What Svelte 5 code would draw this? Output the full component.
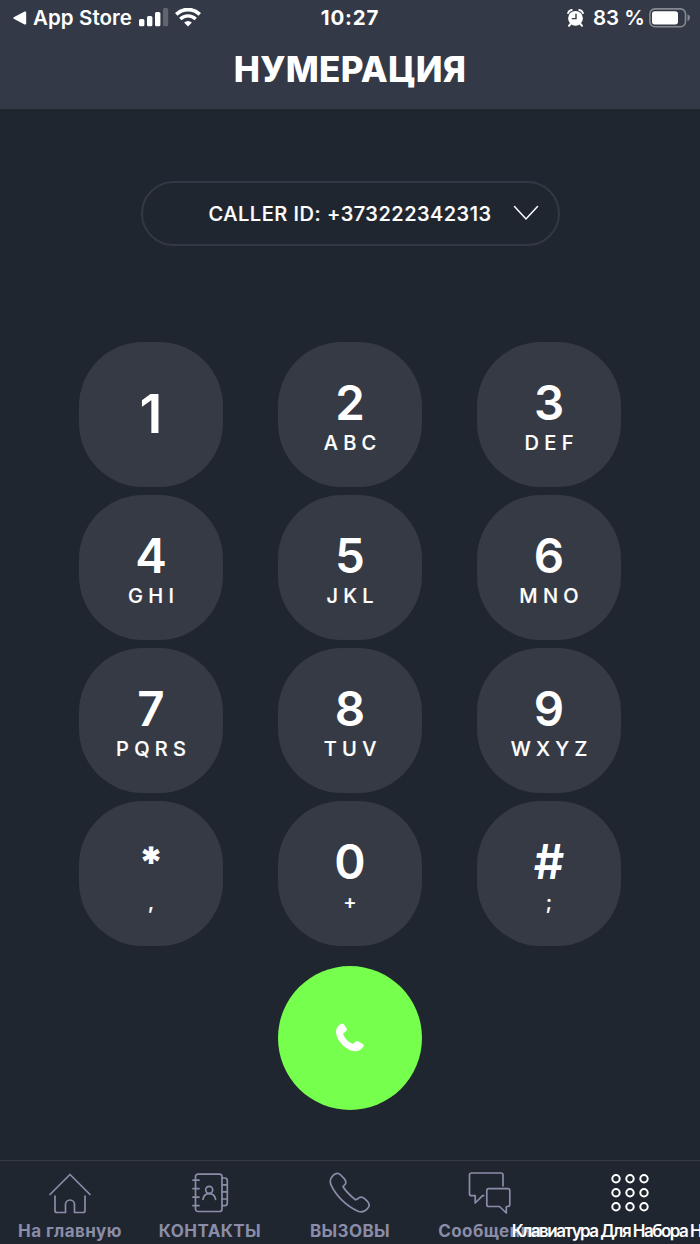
<script>
  const keys = [
    ['1', ''], ['2', 'ABC'], ['3', 'DEF'],
    ['4', 'GHI'], ['5', 'JKL'], ['6', 'MNO'],
    ['7', 'PQRS'], ['8', 'TUV'], ['9', 'WXYZ'],
    ['*', ','], ['0', '+'], ['#', ';']
  ];
  const dots = [6, 20, 34];
</script>

<div class="screen">
  <header>
    <div class="status">
      <div class="left">
        <svg class="back" width="14" height="14" viewBox="0 0 14 14"><path d="M.8 6.2 L11.6 .6 Q13.2 0 13.2 1.8 V12.2 Q13.2 14 11.6 13.4 L.8 7.8 Q-.2 7 .8 6.2Z" fill="#fff" /></svg>
        <span class="store">App Store</span>
        <svg class="signal" width="30" height="19" viewBox="0 0 30 19" fill="#fff">
          <rect x="0" y="11" width="5.4" height="7.2" rx="1.5" />
          <rect x="8" y="8" width="5.4" height="10.2" rx="1.5" />
          <rect x="16" y="4" width="5.4" height="14.2" rx="1.5" />
          <rect x="24" y="0" width="5.2" height="18.2" rx="1.5" opacity=".22" />
        </svg>
        <svg class="wifi" width="26" height="19" viewBox="0 0 26 19" fill="none" stroke="#fff">
          <path d="M1.2 6.3 A17 17 0 0 1 24.8 6.3" stroke-width="3.7" />
          <path d="M5.3 11 A11 11 0 0 1 20.7 11" stroke-width="3.4" />
          <path d="M13 18.6 L9.1 14.6 Q13 11.4 16.9 14.6Z" fill="#fff" stroke="none" />
        </svg>
      </div>
      <div class="time">10:27</div>
      <div class="right">
        <svg class="alarm" width="17" height="18" viewBox="0 0 17 18">
          <circle cx="8.5" cy="9.3" r="7.4" fill="#fff" />
          <path d="M1 4.2 Q1.8 1.5 4.8 1 M16 4.2 Q15.2 1.5 12.2 1" stroke="#fff" stroke-width="1.8" fill="none" stroke-linecap="round" />
          <path d="M3.5 15 L2 16.8 M13.5 15 L15 16.8" stroke="#fff" stroke-width="2" stroke-linecap="round" />
          <path d="M9 4.7 V9.6 H4.8" stroke="#333946" stroke-width="1.4" fill="none" />
        </svg>
        <span class="percent">83 %</span>
        <svg class="battery" width="42" height="20" viewBox="0 0 42 20">
          <rect x=".9" y=".9" width="35.6" height="17.8" rx="5" fill="none" stroke="#858991" stroke-width="1.6" />
          <rect x="3" y="3.2" width="26" height="13.2" rx="2.7" fill="#fff" />
          <path d="M38.5 6.3 Q41 7.3 41 9.6 Q41 12 38.5 13Z" fill="#858991" />
        </svg>
      </div>
    </div>
    <h1>НУМЕРАЦИЯ</h1>
  </header>

  <main>
    <button class="caller">
      <span>CALLER ID: +373222342313</span>
      <svg width="26" height="16" viewBox="0 0 26 16"><path d="M1.5 1.5 L13 14 L24.5 1.5" fill="none" stroke="#fff" stroke-width="1.5" stroke-linecap="round" /></svg>
    </button>

    <div class="pad">
      {#each keys as [digit, letters]}
        <button class="key" class:single={!letters} class:star={digit === '*'}>
          <span class="digit">{digit}</span>
          {#if letters}<span class="letters" class:mark={letters.length === 1}>{letters}</span>{/if}
        </button>
      {/each}
    </div>

    <button class="call" aria-label="Call">
      <svg width="30" height="30" viewBox="0 0 30 30"><path d="M6.2 .8 Q7.6 -.1 8.8 1.3 L11.5 5.2 Q12.5 6.9 11 8.2 L8.8 10 Q7.9 10.9 8.5 12.2 C10.4 16 13.5 19 17 20.5 Q18.3 20.9 19.1 20.1 L20.4 18.8 Q21.7 17.6 23.5 18.5 L27.7 21.1 Q29.5 22.3 28.3 23.8 C26 26.8 23.5 28.5 19.8 28.3 C10.5 27.5 1.3 17.3 1 8.8 C.9 5.3 3.1 2.5 6.2 .8Z" fill="#fff" /></svg>
    </button>
  </main>

  <nav>
    <div class="tab home">
      <svg width="44" height="44" viewBox="0 0 44 44"><path d="M2 22.5 L22 2.5 L42 22.5 M7 24 V38.5 Q7 40.5 9 40.5 H17.5 V32.5 A4.5 4.5 0 0 1 26.5 32.5 V40.5 H35 Q37 40.5 37 38.5 V24" /></svg>
      <span>На главную</span>
    </div>
    <div class="tab contacts">
      <svg width="44" height="44" viewBox="0 0 44 44">
        <rect x="7.5" y="2.2" width="26.5" height="37.3" rx="2.5" />
        <path d="M5 8.2 H11 M5 16.7 H11 M5 25.2 H11 M5 33.7 H11 M34 6 H36.5 Q39.3 6 39.3 8.5 V31 Q39.3 33.7 36.5 33.7 H34 M34 12.8 H39 M34 19.9 H39 M34 27 H39" />
        <circle cx="21.2" cy="17.8" r="3.5" /><path d="M15 27.3 Q16 21.7 21.2 21.7 Q26.4 21.7 27.6 27.3" />
      </svg>
      <span>КОНТАКТЫ</span>
    </div>
    <div class="tab calls">
      <svg width="44" height="44" viewBox="0 0 44 44"><path d="M5.4 3.2 Q9.3 -.4 12.7 3 L16.2 6.7 Q18.6 9.3 17.4 12 Q16.3 13.1 15 14.5 C18 20 23 24.2 27.6 27.8 Q29.7 27.2 30.5 26.1 Q33.6 24.1 36.6 26.6 L39.7 29.7 Q42.7 33.2 39.6 36.5 Q35.7 41.3 30 39.3 C18.8 34.5 8 24 3 12.9 Q.8 7.5 5.4 3.2Z" /></svg>
      <span>ВЫЗОВЫ</span>
    </div>
    <div class="tab messages">
      <svg width="44" height="44" viewBox="0 0 44 44"><path d="M15.7 23.7 H14.5 L7.2 31 V23.7 H3.5 Q1.5 23.7 1.5 21.7 V3 Q1.5 1 3.5 1 H33 Q35 1 35 3 V13.8 M20.8 16.7 H39.8 Q41.8 16.7 41.8 18.7 V32.5 Q41.8 34.5 39.8 34.5 H38.3 V41 L31.5 34.5 H20.8 Q18.8 34.5 18.8 32.5 V18.7 Q18.8 16.7 20.8 16.7Z" /></svg>
      <span>Сообщения</span>
    </div>
    <div class="tab active">
      <svg width="40" height="44" viewBox="0 0 40 44">
        {#each dots as y}{#each dots as x}<circle cx={x} cy={y + 0.7} r="3.7" />{/each}{/each}
      </svg>
      <span>Клавиатура Для Набора Номера</span>
    </div>
  </nav>
</div>

<style>
  :global(body) { margin: 0; background: #202630; }
  .screen { width: 700px; height: 1244px; display: flex; flex-direction: column; overflow: hidden; background: #202630; color: #fff; font-family: Inter, "Liberation Sans", sans-serif; }
  button { border: 0; margin: 0; padding: 0; color: inherit; font: inherit; background: none; }
  svg { display: block; flex: none; }
  span, h1 { white-space: nowrap; }
  header { height: 109px; flex: none; background: #333946; }
  .status { display: grid; grid-template-columns: 1fr auto 1fr; height: 36px; box-sizing: border-box; align-items: center; font-size: 20.5px; line-height: 36px; }
  .left, .right { display: flex; align-items: center; }
  .left { padding-left: 13px; }
  .right { justify-content: flex-end; padding-right: 9px; }
  .store { margin-left: 6px; width: 106px; font-weight: 600; letter-spacing: .08px; }
  .signal { margin-top: -2px; }
  .wifi { margin-left: 6px; margin-top: -2px; }
  .back { margin-top: -1px; }
  .alarm, .battery { margin-top: -1px; }
  .time { font-weight: 700; letter-spacing: .8px; }
  .percent { margin-left: 9px; width: 56px; font-weight: 600; letter-spacing: 0; }
  h1 { margin: 0; height: 66px; line-height: 66px; font-size: 35px; font-weight: 800; letter-spacing: .3px; text-align: center; }
  main { flex: 1; display: flex; flex-direction: column; align-items: center; padding-top: 72px; }
  .caller { box-sizing: border-box; width: 419px; height: 64.5px; flex: none; display: flex; align-items: center; border: 2px solid #333944; border-radius: 33px; padding-left: 66px; font-size: 20px; font-weight: 500; -webkit-text-stroke: .2px #fff; }
  .caller span { width: 304px; text-align: left; letter-spacing: .53px; padding-top: 1px; }
  .pad { display: grid; grid-template-columns: repeat(3, 144px); grid-auto-rows: 145px; gap: 8px 55px; margin-top: 96.5px; }
  .key { display: flex; flex-direction: column; align-items: center; box-sizing: border-box; padding-top: 32px; border-radius: 64px; background: #353a45; }
  .digit { font-size: 47.5px; line-height: 58px; font-weight: 600; }
  .single { padding-top: 43px; }
  .single .digit { font-size: 54px; }
  .star .digit { font-size: 40px; -webkit-text-stroke: 1px #fff; }
  .letters { height: 24px; line-height: 24px; margin-top: -1px; font-size: 20px; font-weight: 500; letter-spacing: 5.3px; margin-right: -5.3px; -webkit-text-stroke: .2px #fff; }
  .mark { letter-spacing: 0; margin-right: 0; }
  .call { width: 144px; height: 144px; flex: none; margin-top: 20px; border-radius: 50%; background: #76ff4c; display: flex; align-items: center; justify-content: center; }
  nav { box-sizing: border-box; height: 84px; flex: none; border-top: 1px solid #353a46; display: grid; grid-template-columns: repeat(5, 140px); background: #202630; }
  .tab { display: flex; flex-direction: column; align-items: center; min-width: 0; padding-top: 11px; color: #8a8da8; }
  .tab svg { fill: none; stroke: currentColor; stroke-width: 1.7; stroke-linecap: round; stroke-linejoin: round; }
  .tab span { line-height: 22px; margin-top: 4px; font-size: 17px; font-weight: 700; letter-spacing: .4px; }
  .active { color: #fff; }
  .active svg { stroke-width: 2; }
  .active span { font-weight: 600; letter-spacing: -1.52px; }
</style>
